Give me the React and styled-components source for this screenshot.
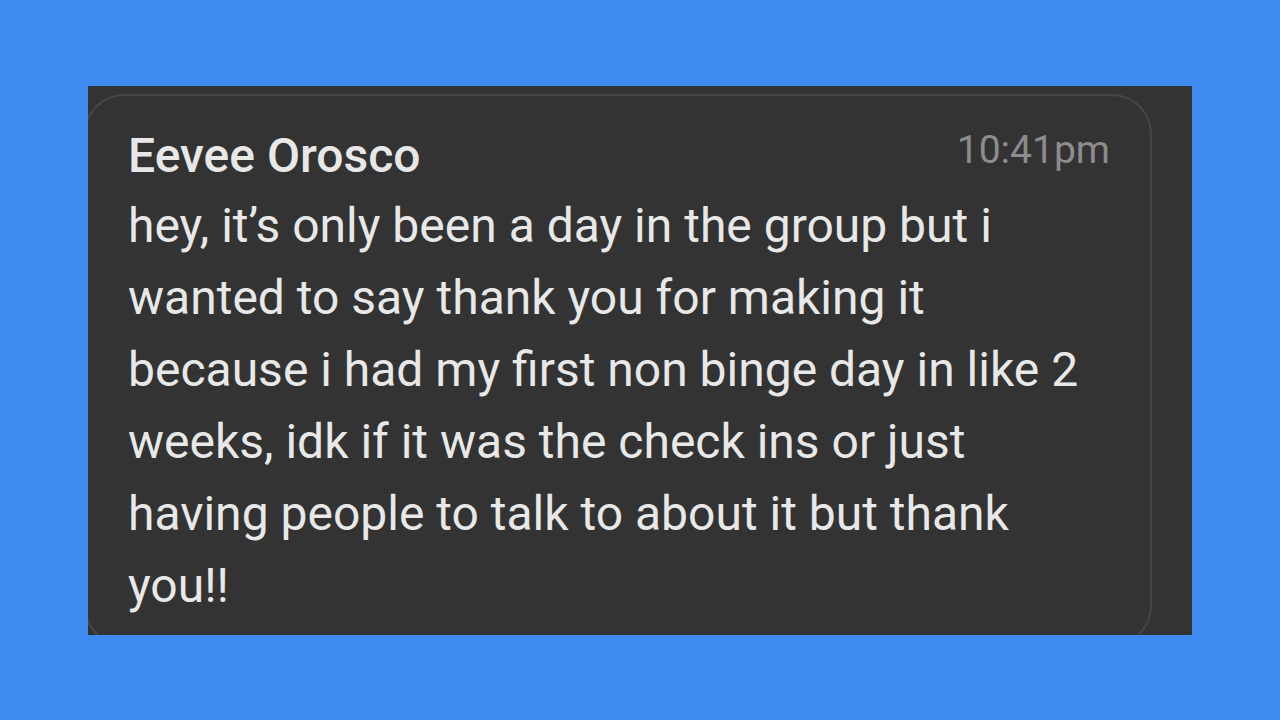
import React from 'react'
import styled, {createGlobalStyle} from 'styled-components'

const GlobalStyle = createGlobalStyle`
  html, body {
    margin: 0;
    padding: 0;
    background: #3d8bee;
  }
  body {
    font-family: Roboto, "Liberation Sans", sans-serif;
  }
`

const Page = styled.div`
  width: 1280px;
  height: 720px;
  display: flex;
  align-items: flex-start;
  justify-content: center;
  padding-top: 86px;
  box-sizing: border-box;
`

const Panel = styled.div`
  width: 1104px;
  height: 549px;
  background: #333333;
  overflow: hidden;
  padding-top: 8px;
  box-sizing: border-box;
`

const Card = styled.div`
  width: 1068px;
  margin-left: -4px;
  border: 2px solid #464646;
  border-radius: 40px;
  padding: 24px 40px 22px 42px;
  box-sizing: border-box;
`

const Header = styled.div`
  display: flex;
  justify-content: space-between;
  align-items: baseline;
`

const Name = styled.div`
  font-size: 48px;
  font-weight: 500;
  color: #e8e8e8;
  line-height: 72px;
`

const Time = styled.div`
  font-size: 39px;
  color: #8c8c8c;
  line-height: 60px;
  align-self: flex-start;
`

const Body = styled.p`
  margin: -2px 0 0;
  max-width: 960px;
  font-size: 48px;
  line-height: 72px;
  color: #e8e8e8;
`

const message = {
  name: 'Eevee Orosco',
  time: '10:41pm',
  text: 'hey, it\u2019s only been a day in the group but i wanted to say thank you for making it because i had my first non binge day in like 2 weeks, idk if it was the check ins or just having people to talk to about it but thank you!!',
}

const App = () => {
  return <>
    <GlobalStyle />
    <Page>
      <Panel>
        <Card>
          <Header>
            <Name>{message.name}</Name>
            <Time>{message.time}</Time>
          </Header>
          <Body>{message.text}</Body>
        </Card>
      </Panel>
    </Page>
  </>
}

export default App
